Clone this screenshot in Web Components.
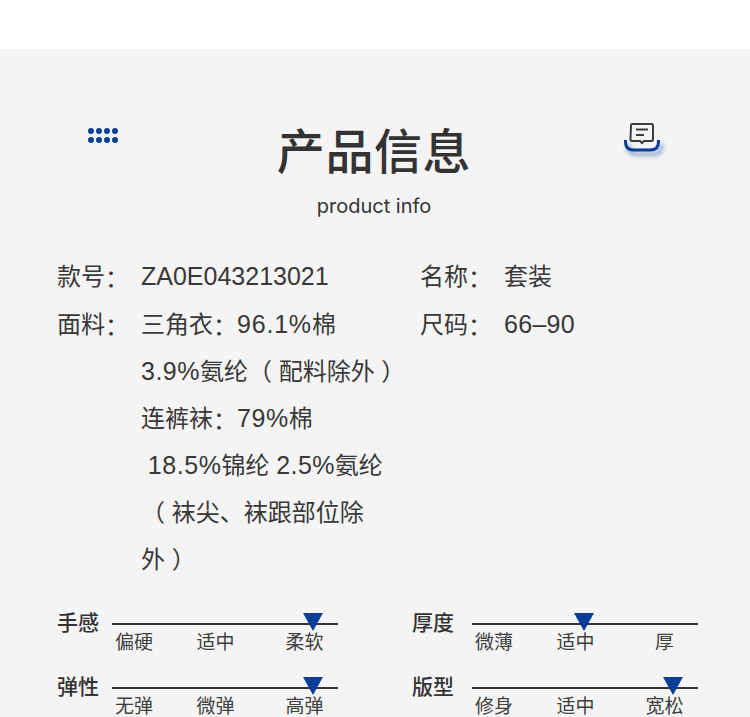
<!DOCTYPE html>
<html lang="zh-CN"><head><meta charset="utf-8"><title>产品信息</title>
<style>
html,body{margin:0;padding:0;background:#fff}
body{width:750px;height:717px;overflow:hidden;font-family:"Liberation Sans","Noto Sans CJK SC",sans-serif;color:#333}
</style></head><body>
<product-panel>
  <panel-header slot="header" title-text="产品信息" subtitle="product info"></panel-header>
  <spec-list slot="specs">
    <spec-row label="款号" slot="left"><lat-run s="0">ZA0E043213021</lat-run></spec-row>
    <spec-row label="面料" slot="left">三角衣<low-colon></low-colon><lat-run s=".8">96.1%</lat-run>棉<br><lat-run s=".5">3.9%</lat-run>氨纶（ 配料除外 ）<br>连裤袜<low-colon></low-colon><lat-run s=".6">79%</lat-run>棉<br>&nbsp;<lat-run s=".6">18.5%</lat-run>锦纶 <lat-run s=".4">2.5%</lat-run>氨纶<br>（ 袜尖、袜跟部位除<br>外 ）</spec-row>
    <spec-row label="名称" slot="right">套装</spec-row>
    <spec-row label="尺码" slot="right"><lat-run s=".3">66–90</lat-run></spec-row>
  </spec-list>
  <fit-grid slot="fit">
    <fit-scale label="手感" options="偏硬,适中,柔软" marker="201" gap="13"></fit-scale>
    <fit-scale label="厚度" options="微薄,适中,厚" marker="112" gap="18"></fit-scale>
    <fit-scale label="弹性" options="无弹,微弹,高弹" marker="201" gap="13"></fit-scale>
    <fit-scale label="版型" options="修身,适中,宽松" marker="201" gap="18"></fit-scale>
  </fit-grid>
</product-panel>
<script>
function def(name, html, init){
  customElements.define(name, class extends HTMLElement{
    constructor(){super();this.attachShadow({mode:'open'}).innerHTML=html;}
    connectedCallback(){ if(init) init(this,this.shadowRoot); }
  });
}
def('product-panel',`<style>
:host{display:block;margin-top:49px;height:668px;background:#f4f4f4;overflow:hidden}
.specs{margin-top:36.4px;height:329px}
.fit{margin-top:26.6px}
</style>
<slot name="header"></slot>
<div class="specs"><slot name="specs"></slot></div>
<div class="fit"><slot name="fit"></slot></div>`);

def('panel-header',`<style>
:host{display:grid;grid-template-columns:88px 30px 1fr 44px 82px;padding-top:69px;height:99px}
.dots{grid-column:2;display:grid;grid-template-columns:repeat(4,6px);gap:3px 2px;align-content:start;margin-top:10px}
.dots i{width:6px;height:6px;border-radius:50%;background:#0a3d97}
.mid{grid-column:3;text-align:center;margin-left:-38px;margin-right:-44px}
h1{margin:0;font:500 48px/60px "Noto Sans CJK SC",sans-serif;letter-spacing:.6px;color:#333}
p{margin:15px 0 0;font:400 20px/26px Inter,sans-serif;color:#333}
svg{grid-column:4;display:block;margin-top:2px;overflow:visible}
</style>
<div class="dots"><i></i><i></i><i></i><i></i><i></i><i></i><i></i><i></i></div>
<div class="mid"><h1></h1><p></p></div>
<svg width="44" height="40" viewBox="0 0 44 40">
  <defs><filter id="s" x="-30%" y="-60%" width="160%" height="260%"><feGaussianBlur stdDeviation="2.2"/></filter></defs>
  <path d="M1.500 20v2q0 8 8 8h17q8 0 8-8v-2" transform="translate(3 4)" fill="none" stroke="#0a3d97" stroke-opacity=".4" stroke-width="4" filter="url(#s)"/>
  <path d="M1.500 20v2q0 8 8 8h17q8 0 8-8v-2" fill="none" stroke="#0a3d97" stroke-width="3"/>
  <path d="M7 5.500q0-1.500 1.500-1.500h19q1.500 0 1.500 1.500v14q0 1.500-1.500 1.500h-7.500l-2 2-2-2h-8q-1.500 0-1.500-1.500z" fill="#f4f4f4" stroke="#3c3c3c" stroke-width="2"/>
  <path d="M12 9.500h12M12 15h8" stroke="#3c3c3c" stroke-width="2" fill="none"/>
</svg>`,(h,s)=>{
  s.querySelector('h1').textContent=h.getAttribute('title-text');
  s.querySelector('p').textContent=h.getAttribute('subtitle');
});

def('lat-run',`<style>:host{display:inline;font-size:25px;line-height:0}</style><slot></slot>`,(h)=>{
  h.style.letterSpacing=h.getAttribute('s')+'px';
});

def('low-colon',`<style>:host{display:inline}span{vertical-align:-2px;line-height:0}</style><span>：</span>`);

def('spec-list',`<style>
:host{display:grid;grid-template-columns:363px 1fr;padding-left:57px}
</style>
<div><slot name="left"></slot></div><div><slot name="right"></slot></div>`);

def('spec-row',`<style>
:host{display:grid;grid-template-columns:84px 1fr;font:400 24px/47.15px "Liberation Sans","Noto Sans CJK SC",sans-serif;color:#383838}
.v{white-space:pre-wrap}
.c{vertical-align:-2px;line-height:0}
</style>
<div><span class="l"></span><span class="c">：</span></div><div class="v"><slot></slot></div>`,(h,s)=>{
  s.querySelector('.l').textContent=h.getAttribute('label');
});

def('fit-grid',`<style>
:host{display:grid;grid-template-columns:355px 1fr;row-gap:16px;padding-left:57px}
</style><slot></slot>`);

def('fit-scale',`<style>
:host{display:flex;font-family:"Noto Sans CJK SC",sans-serif;color:#333;height:48px}
.l{width:42px;flex:none;font-weight:500;font-size:21px;line-height:25px}
.r{position:relative;width:226px;flex:none}
.line{height:2px;background:#333;margin-top:14px}
.m{position:absolute;top:4px;width:0;height:0;border-left:10.5px solid transparent;border-right:10.5px solid transparent;border-top:18px solid #0a3d97;transform:translateX(-50%)}
.o{display:grid;grid-template-columns:44px 119px 59px;text-align:center;font-size:19px;line-height:26px;margin-top:3px;white-space:nowrap;color:#404040}
</style>
<div class="l"></div>
<div class="r"><div class="line"></div><div class="m"></div><div class="o"></div></div>`,(h,s)=>{
  s.querySelector('.l').textContent=h.getAttribute('label');
  s.querySelector('.l').style.marginRight=h.getAttribute('gap')+'px';
  s.querySelector('.m').style.left=h.getAttribute('marker')+'px';
  s.querySelector('.o').innerHTML=h.getAttribute('options').split(',').map(t=>'<span>'+t+'</span>').join('');
});
</script>
</body></html>
